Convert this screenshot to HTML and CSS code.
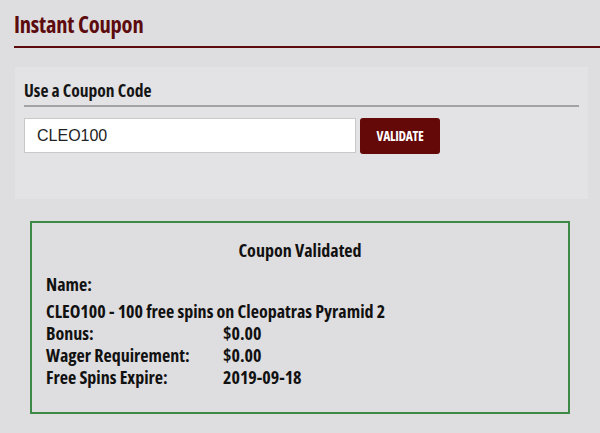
FILE: index.html
```html
<!DOCTYPE html>
<html>
<head>
<meta charset="utf-8">
<link rel="stylesheet" href="styles.css">
</head>
<body>
<div class="page">
  <h1 class="title">Instant Coupon</h1>
  <div class="panel">
    <h2 class="panel-title">Use a Coupon Code</h2>
    <div class="form-row">
      <div class="input">CLEO100</div>
      <button class="btn">VALIDATE</button>
    </div>
  </div>
  <div class="result">
    <div class="result-title">Coupon Validated</div>
    <div class="line name">Name:</div>
    <div class="line">CLEO100 - 100 free spins on Cleopatras Pyramid 2</div>
    <div class="row"><span class="label">Bonus:</span><span>$0.00</span></div>
    <div class="row"><span class="label">Wager Requirement:</span><span>$0.00</span></div>
    <div class="row"><span class="label">Free Spins Expire:</span><span>2019-09-18</span></div>
  </div>
</div>
</body>
</html>
```

FILE: styles.css
```css
html, body {
  margin: 0;
  padding: 0;
  background: #dedddf;
}
body {
  font-family: "Open Sans", "DejaVu Sans Condensed", sans-serif;
  font-stretch: 78%;
  color: #111;
  width: 600px;
  height: 433px;
  overflow: hidden;
}
.page {
  padding: 10px 0 0 14px;
}
.title {
  margin: 0;
  font-size: 22.5px;
  font-weight: bold;
  color: #5c0b0e;
  line-height: 30px;
  padding-bottom: 6px;
  border-bottom: 2px solid #5c0b0e;
  letter-spacing: -0.2px;
}
.panel {
  margin: 19px 12px 0 1px;
  background: #e3e2e4;
  height: 132px;
  box-sizing: border-box;
  padding: 12px 9px 0 9px;
}
.panel-title {
  margin: 0;
  font-size: 17.5px;
  font-weight: bold;
  line-height: 22px;
  padding-bottom: 4px;
  border-bottom: 2px solid #a3a3a5;
  color: #151515;
}
.form-row {
  display: flex;
  gap: 4px;
  margin-top: 11px;
}
.input {
  width: 332px;
  height: 35px;
  box-sizing: border-box;
  background: #fff;
  border: 1px solid #c9c9c9;
  font-family: "Liberation Sans", Arial, sans-serif;
  font-stretch: normal;
  font-size: 16px;
  color: #222;
  padding: 0 0 0 12px;
  line-height: 33px;
}
.btn {
  width: 80px;
  height: 36px;
  border: none;
  border-radius: 3px;
  background: #650808;
  color: #fff;
  font-family: "Open Sans", sans-serif;
  font-stretch: 75%;
  font-weight: bold;
  font-size: 13.5px;
  padding: 0;
  letter-spacing: -0.3px;
}
.result {
  margin: 22px 30px 0 16px;
  border: 2px solid #3c8a46;
  height: 193px;
  box-sizing: border-box;
  padding: 16px 0 0 14px;
  font-size: 18px;
  font-stretch: 79%;
  font-weight: bold;
  line-height: 22px;
}
.result-title {
  text-align: center;
  padding-right: 14px;
  margin-bottom: 12px;
}
.name {
  margin-bottom: 5px;
}
.row {
  display: flex;
}
.label {
  width: 177px;
}
```
